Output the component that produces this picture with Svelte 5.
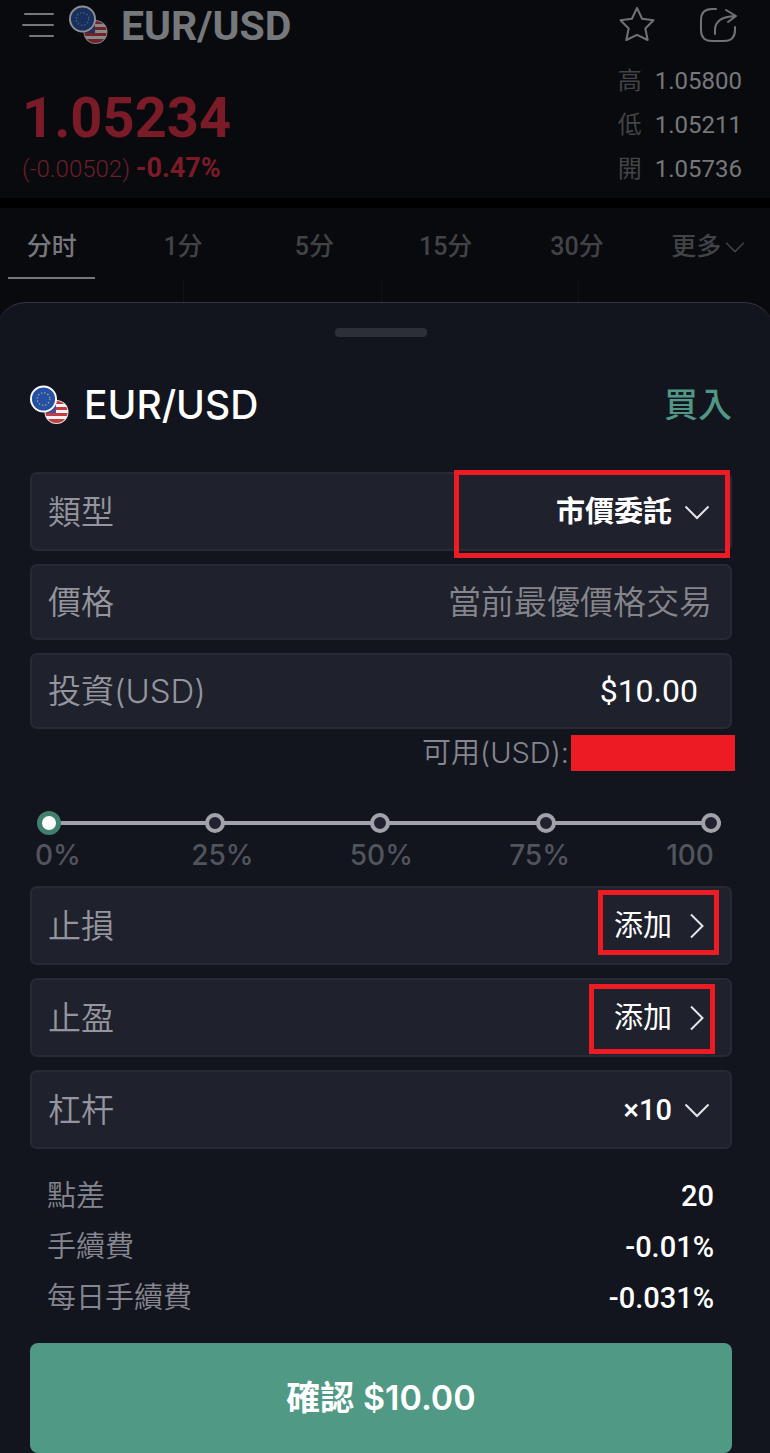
<script>
    const prices = [
        { label: '高', value: '1.05800' },
        { label: '低', value: '1.05211' },
        { label: '開', value: '1.05736' }
    ];
    const tabs = ['分时', '1分', '5分', '15分', '30分'];
    const steps = ['0%', '25%', '50%', '75%', '100'];
    const fees = [
        { label: '點差', value: '20' },
        { label: '手續費', value: '-0.01%' },
        { label: '每日手續費', value: '-0.031%' }
    ];

    let activeTab = $state('分时');
    let orderType = $state('市價委託');
    let leverage = $state('×10');
    let amount = $state('$10.00');
    let percent = $state(0);
</script>

{#snippet flags()}
    <svg class="flags" viewBox="0 0 40 40" aria-hidden="true">
        <clipPath id="us-clip"><circle cx="26.5" cy="27" r="11" /></clipPath>
        <circle cx="26.5" cy="27" r="12" fill="#e9dfe0" />
        <g clip-path="url(#us-clip)">
            <rect x="15" y="15" width="24" height="24" fill="#f4f1f2" />
            <g fill="#c23b3f">
                <rect x="15" y="16" width="24" height="3" />
                <rect x="15" y="22" width="24" height="3" />
                <rect x="15" y="28" width="24" height="3" />
                <rect x="15" y="34" width="24" height="4" />
            </g>
            <rect x="15" y="15" width="11" height="13" fill="#3f4f9b" />
        </g>
        <circle cx="13.5" cy="14" r="13.5" fill="#fff" />
        <circle cx="13.5" cy="14" r="11.6" fill="#2450a8" />
        <circle cx="13.5" cy="14" r="6.3" fill="none" stroke="#a9b06a" stroke-width="1.3" stroke-dasharray="1.3 2" />
    </svg>
{/snippet}

{#snippet chevronDown()}
    <svg class="chevron" viewBox="0 0 26 26" aria-hidden="true">
        <path d="M1.500 7.500 13 19 24.500 7.500" />
    </svg>
{/snippet}

{#snippet chevronRight()}
    <svg class="chevron" viewBox="0 0 26 26" aria-hidden="true">
        <path d="M7 1.500 18.500 13 7 24.500" />
    </svg>
{/snippet}

<div class="page">
    <header class="quote">
        <div class="toolbar">
            <button class="icon-btn" aria-label="Menu">
                <svg class="menu-icon" viewBox="0 0 34 26">
                    <path d="M3 2H31M1 13H31M8 24H31" />
                </svg>
            </button>
            {@render flags()}
            <h1>EUR/USD</h1>
            <button class="icon-btn" aria-label="Favorite">
                <svg class="tool-icon" viewBox="0 0 38 38">
                    <path d="M19 2 24.100 12.700 35.500 14.300 27.300 22.500 29.700 34 19 28.800 8.300 34 10.700 22.500 2.500 14.300 13.900 12.700Z" />
                </svg>
            </button>
            <button class="icon-btn share" aria-label="Share">
                <svg class="tool-icon" viewBox="0 0 38 38">
                    <path d="M17 3H13Q2 3 2 14V24Q2 35 13 35H25Q36 35 36 24V21" />
                    <path d="M16 28V24Q16 11 36 10M27 4 37 10 29 16" />
                </svg>
            </button>
        </div>
        <div class="summary">
            <div>
                <div class="price">1.05234</div>
                <div class="change">(-0.00502) <strong>-0.47%</strong></div>
            </div>
            <dl class="prices">
                {#each prices as item}
                    <div><dt>{item.label}</dt><dd>{item.value}</dd></div>
                {/each}
            </dl>
        </div>
    </header>

    <nav class="tabs">
        {#each tabs as tab}
            <button class="tab" class:active={activeTab === tab} onclick={() => activeTab = tab}>{tab}</button>
        {/each}
        <button class="tab">更多 {@render chevronDown()}</button>
    </nav>
    <div class="chart-lines"><span></span><span></span><span></span></div>

    <main class="sheet">
        <div class="handle"></div>
        <div class="title">
            {@render flags()}
            <h2>EUR/USD</h2>
            <span class="side">買入</span>
        </div>

        <div class="fields">
            <div class="row">
                <label for="type">類型</label>
                <select id="type" bind:value={orderType}>
                    <option>市價委託</option>
                    <option>限價委託</option>
                </select>
                {@render chevronDown()}
                <span class="mark mark-type"></span>
            </div>
            <div class="row short">
                <span>價格</span>
                <span class="hint">當前最優價格交易</span>
            </div>
            <div class="row short">
                <label for="amount">投資(USD)</label>
                <input id="amount" class="amount" type="text" bind:value={amount} />
            </div>
        </div>

        <div class="available">
            <span>可用(USD):</span>
            <span class="redacted"></span>
        </div>

        <div class="slider">
            <div class="ticks">
                {#each steps as step}<span></span>{/each}
            </div>
            <input type="range" min="0" max="100" step="25" aria-label="投資 %" bind:value={percent} />
        </div>
        <div class="steps">
            {#each steps as step}<span>{step}</span>{/each}
        </div>

        <div class="fields">
            <div class="row">
                <span>止損</span>
                <button class="add">添加 {@render chevronRight()}</button>
                <span class="mark mark-loss"></span>
            </div>
            <div class="row">
                <span>止盈</span>
                <button class="add">添加 {@render chevronRight()}</button>
                <span class="mark mark-profit"></span>
            </div>
            <div class="row">
                <label for="leverage">杠杆</label>
                <select id="leverage" class="number" bind:value={leverage}>
                    <option>×10</option>
                    <option>×20</option>
                </select>
                {@render chevronDown()}
            </div>
        </div>

        <dl class="fees">
            {#each fees as fee}
                <div><dt>{fee.label}</dt><dd>{fee.value}</dd></div>
            {/each}
        </dl>

        <button class="confirm">確認 {amount}</button>
    </main>
</div>

<style>
    :global(body) {
        background: #13151e;
    }
    .page {
        overflow: hidden;
        background: #090a0e;
        color: #fff;
        font-family: Roboto, "Noto Sans CJK TC", sans-serif;
    }
    h1, h2, dl, dd {
        margin: 0;
    }
    button, select, input {
        margin: 0;
        padding: 0;
        border: none;
        background: none;
        color: inherit;
        font: inherit;
    }
    button {
        cursor: pointer;
    }
    svg {
        display: block;
        flex: none;
        fill: none;
    }

    /* quote header */
    .quote {
        padding: 0 28px 0 22px;
        border-bottom: 10px solid #000;
        height: 198px;
    }
    .toolbar {
        display: flex;
        align-items: center;
        height: 50px;
        margin-right: 5px;
    }
    .flags {
        width: 40px;
        height: 40px;
    }
    .toolbar .flags {
        opacity: 0.55;
        margin-left: 13px;
    }
    h1 {
        flex: 1;
        margin-left: 12px;
        padding-top: 2px;
        font-size: 41px;
        line-height: 50px;
        font-weight: 700;
        color: #77787b;
    }
    .menu-icon {
        width: 34px;
        height: 26px;
        stroke: #77787b;
        stroke-width: 2;
        stroke-linecap: round;
    }
    .tool-icon {
        width: 38px;
        height: 38px;
        stroke: #717275;
        stroke-width: 2;
        stroke-linecap: round;
        stroke-linejoin: round;
    }
    .share {
        margin-left: 43px;
    }
    .summary {
        display: flex;
        justify-content: space-between;
        padding-top: 9px;
    }
    .price {
        padding-top: 27px;
        font-size: 56px;
        line-height: 64px;
        font-weight: 700;
        color: #7b1b28;
    }
    .change {
        font-size: 24px;
        line-height: 36px;
        font-weight: 300;
        color: #6b1f2b;
    }
    .change strong {
        font-size: 27px;
        font-weight: 700;
        color: #7b1b28;
    }
    .prices div {
        display: flex;
        gap: 13px;
        font-size: 24px;
        line-height: 44px;
    }
    .prices dt {
        color: #434447;
    }
    .prices dd {
        color: #77787b;
    }

    /* interval tabs */
    .tabs {
        display: grid;
        grid-template-columns: repeat(6, 1fr);
        margin: 0 -4px 0 -14px;
    }
    .tab {
        display: flex;
        align-items: center;
        justify-content: center;
        gap: 4px;
        height: 71px;
        padding-top: 8px;
        margin: 0 22px;
        border-bottom: 2px solid transparent;
        font: 500 25px/36px Roboto, "Noto Sans CJK SC", sans-serif;
        white-space: nowrap;
        color: #424347;
    }
    .tab.active {
        border-bottom-color: #77787b;
        color: #77787b;
    }
    .tab .chevron {
        width: 20px;
        height: 20px;
        stroke: #424347;
    }
    .chart-lines {
        display: flex;
        justify-content: space-between;
        height: 23px;
        padding: 0 191px 0 183px;
    }
    .chart-lines span {
        width: 1px;
        background: #111217;
    }

    /* order sheet */
    .sheet {
        margin: 0 -4px;
        padding: 0 42px 0 34px;
        border-top: 1px solid #35373e;
        border-radius: 30px 30px 0 0;
        background: #13151e;
    }
    .sheet::before {
        content: "";
        display: block;
        height: 25px;
    }
    .handle {
        width: 92px;
        height: 9px;
        margin: 0 auto;
        border-radius: 4px;
        background: #2d2f38;
    }
    .title {
        display: flex;
        align-items: center;
        height: 60px;
        margin: 38px 0 37px;
    }
    h2 {
        flex: 1;
        margin-left: 14px;
        font: 500 39px/60px Inter, sans-serif;
    }
    .side {
        font-size: 34px;
        line-height: 60px;
        font-weight: 500;
        color: #529786;
    }
    .fields {
        display: flex;
        flex-direction: column;
        gap: 13px;
    }
    .row {
        position: relative;
        display: flex;
        align-items: center;
        justify-content: space-between;
        box-sizing: border-box;
        height: 79px;
        padding: 0 20px 0 16px;
        border: 2px solid #272933;
        border-radius: 7px;
        background: #1f212c;
        font: 350 33px/48px Inter, "Noto Sans CJK TC", sans-serif;
        color: #94959e;
    }
    .row.short {
        height: 76px;
        padding-right: 18px;
    }
    .row select {
        flex: 1;
        appearance: none;
        margin-right: 12px;
        font-size: 29px;
        font-weight: 700;
        text-align-last: right;
        color: #fff;
    }
    .row .number {
        font-family: Roboto, sans-serif;
        font-weight: 500;
    }
    .amount {
        width: 200px;
        padding-right: 14px;
        font: 400 32px/48px Roboto, sans-serif;
        text-align: right;
        color: #fff;
    }
    .hint {
        color: #85868c;
    }
    .chevron {
        width: 26px;
        height: 26px;
        stroke: #e4e5e8;
        stroke-width: 2;
    }
    .add {
        display: flex;
        align-items: center;
        gap: 12px;
        font-size: 29px;
        font-weight: 400;
        color: #fff;
    }
    .mark {
        position: absolute;
        box-sizing: border-box;
        border: 5px solid #ed1c24;
        pointer-events: none;
    }
    .mark-type {
        top: -4px;
        right: 0;
        width: 276px;
        height: 88px;
    }
    .mark-loss {
        top: 2px;
        right: 11px;
        width: 121px;
        height: 65px;
    }
    .mark-profit {
        top: 4px;
        right: 15px;
        width: 126px;
        height: 70px;
    }
    .available {
        display: flex;
        justify-content: flex-end;
        align-items: center;
        gap: 2px;
        margin: 6px -3px 0 0;
        font: 350 29px/36px Inter, "Noto Sans CJK TC", sans-serif;
        color: #85868f;
    }
    .redacted {
        width: 164px;
        height: 36px;
        background: #ed1c24;
    }

    /* amount slider */
    .slider {
        display: grid;
        align-items: center;
        margin: 40px 9px 0 7px;
    }
    .ticks, .slider input {
        grid-area: 1 / 1;
    }
    .ticks {
        display: flex;
        justify-content: space-between;
        margin: 0 2px;
        background: linear-gradient(#a2a3aa, #a2a3aa) center / 100% 4px no-repeat;
    }
    .ticks span {
        box-sizing: border-box;
        width: 20px;
        height: 20px;
        border: 4px solid #a2a3aa;
        border-radius: 50%;
        background: #20222f;
    }
    .slider input {
        appearance: none;
        width: 100%;
        height: 24px;
    }
    .slider input::-webkit-slider-thumb {
        appearance: none;
        box-sizing: border-box;
        width: 24px;
        height: 24px;
        border: 5px solid #41806f;
        border-radius: 50%;
        background: #fff;
    }
    .steps {
        display: flex;
        justify-content: space-between;
        margin: 4px 18px 15px 5px;
        font: 500 28px/32px Inter, sans-serif;
        color: #52545d;
    }
    .steps span:first-child {
        min-width: 60px;
    }

    .fees {
        padding: 22px 18px 19px 17px;
    }
    .fees div {
        display: flex;
        justify-content: space-between;
        font-size: 29px;
        line-height: 51px;
    }
    .fees dt {
        font-weight: 350;
        color: #85868f;
    }
    .fees dd {
        font-weight: 500;
    }
    .confirm {
        display: block;
        width: 100%;
        height: 110px;
        border-radius: 8px;
        background: #509985;
        font: 600 34px/48px Inter, "Noto Sans CJK TC", sans-serif;
        color: #fff;
    }
</style>
